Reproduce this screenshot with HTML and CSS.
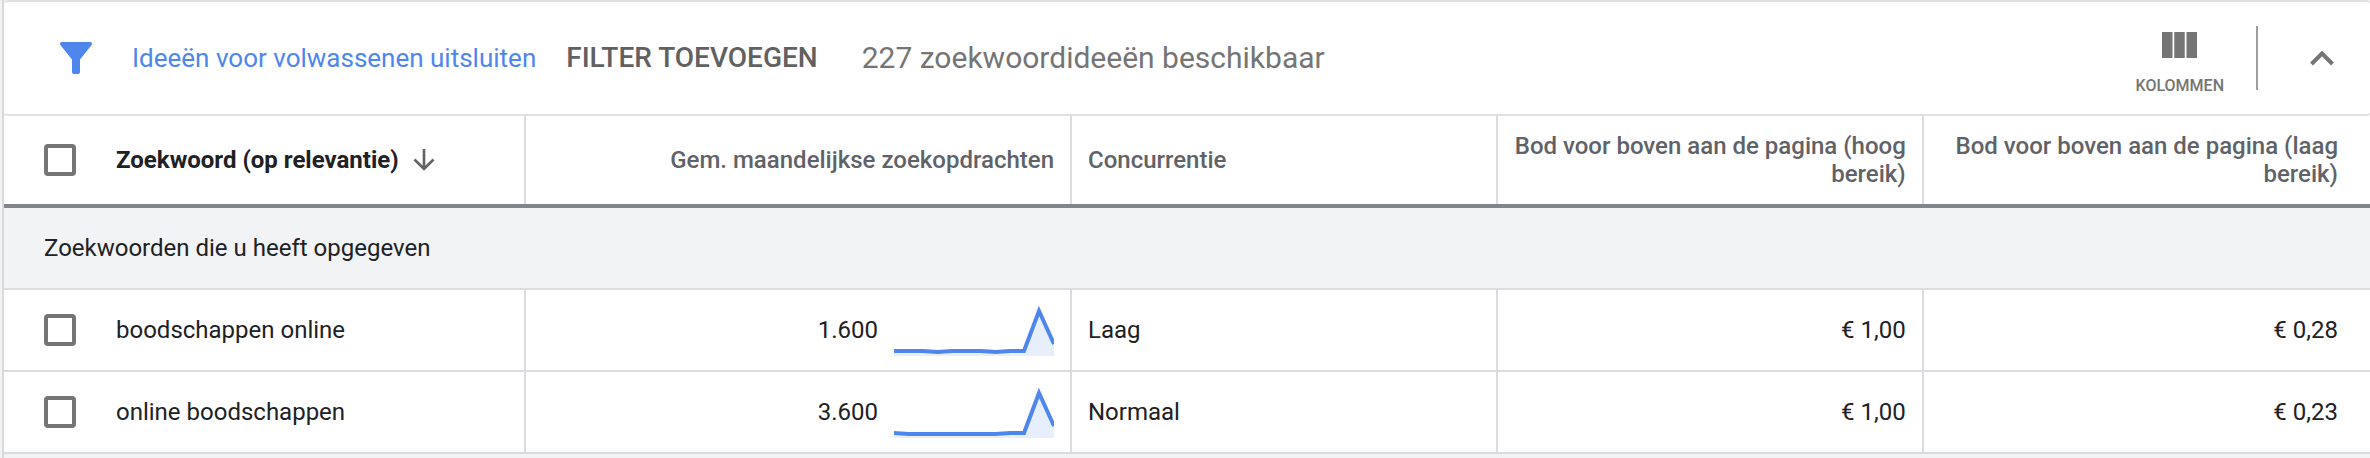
FILE: index.html
```html
<!DOCTYPE html>
<html lang="nl">
<head>
<meta charset="utf-8">
<title>Zoekwoordideeën</title>
<link rel="stylesheet" href="styles.css">
</head>
<body>
<main class="panel">
  <header class="toolbar">
    <svg class="filter-icon" viewBox="0 0 32 32" aria-hidden="true"><path d="M1.6 0H30.4Q32 0 32 1.6Q32 2.5 31.2 3.4L20 17.600V30.200Q20 32 18.200 32H13.800Q12 32 12 30.200V17.600L.8 3.400Q0 2.500 0 1.600Q0 0 1.600 0Z" fill="#4f86ec"/></svg>
    <a class="filter-link" href="#">Ideeën voor volwassenen uitsluiten</a>
    <button class="add-filter" type="button">FILTER TOEVOEGEN</button>
    <span class="count">227 zoekwoordideeën beschikbaar</span>
    <div class="actions">
      <button class="columns" type="button">
        <svg class="columns-icon" viewBox="0 0 35 26" aria-hidden="true"><path d="M0 0H10.500V26H0ZM12.250 0H22.750V26H12.250ZM24.500 0H35V26H24.500Z" fill="#757575"/></svg>
        <span>KOLOMMEN</span>
      </button>
      <button class="collapse" type="button" aria-label="Inklappen">
        <svg class="chevron-icon" viewBox="0 0 24 15" aria-hidden="true"><path d="M1.500 13L12 2.500L22.500 13" fill="none" stroke="#757575" stroke-width="4"/></svg>
      </button>
    </div>
  </header>
  <table class="grid">
    <colgroup><col class="col-keyword"><col class="col-volume"><col class="col-bid"><col class="col-bid"><col class="col-last"></colgroup>
    <thead>
      <tr>
        <th class="sorted" scope="col"><div class="keyword"><input class="check" type="checkbox" aria-label="Alles selecteren"><span>Zoekwoord (op relevantie)</span><svg class="sort-icon" viewBox="0 0 22 22" aria-hidden="true"><path d="M11 0V20M1.500 10.500L11 20L20.500 10.500" fill="none" stroke="#616161" stroke-width="2.600"/></svg></div></th>
        <th class="num" scope="col">Gem. maandelijkse zoekopdrachten</th>
        <th scope="col">Concurrentie</th>
        <th class="num" scope="col">Bod voor boven aan de pagina (hoog bereik)</th>
        <th class="num" scope="col">Bod voor boven aan de pagina (laag bereik)</th>
      </tr>
    </thead>
    <tbody>
      <tr><td class="group" colspan="5">Zoekwoorden die u heeft opgegeven</td></tr>
      <tr>
        <td><label class="keyword"><input class="check" type="checkbox"><span>boodschappen online</span></label></td>
        <td><div class="volume"><span>1.600</span><svg class="spark" viewBox="0 -2 160 52" aria-hidden="true"><path d="M0 45H29L43.600 46L58 45H87L101.500 46L116 45H130L145 5L160 38V50H0Z" fill="#e8effc"/><path d="M0 45H29L43.600 46L58 45H87L101.500 46L116 45H130L145 5L160 38" fill="none" stroke="#4f86ec" stroke-width="4"/></svg></div></td>
        <td>Laag</td>
        <td class="num">€ 1,00</td>
        <td class="num">€ 0,28</td>
      </tr>
      <tr>
        <td><label class="keyword"><input class="check" type="checkbox"><span>online boodschappen</span></label></td>
        <td><div class="volume"><span>3.600</span><svg class="spark" viewBox="0 -2 160 52" aria-hidden="true"><path d="M0 45L14.500 46H101.500L116 45H130L145 5L160 38V50H0Z" fill="#e8effc"/><path d="M0 45L14.500 46H101.500L116 45H130L145 5L160 38" fill="none" stroke="#4f86ec" stroke-width="4"/></svg></div></td>
        <td>Normaal</td>
        <td class="num">€ 1,00</td>
        <td class="num">€ 0,23</td>
      </tr>
    </tbody>
  </table>
</main>
</body>
</html>
```
FILE: styles.css
```css
* {
  box-sizing: border-box;
}

body {
  margin: 0;
  padding-left: 2px;
  background: #f1f3f4;
  color: #202124;
  font: 24px/28px Roboto, sans-serif;
}

.panel {
  min-height: 100vh;
  border-left: 2px solid #d9d9d9;
}

.toolbar {
  display: flex;
  align-items: center;
  height: 116px;
  padding: 0 32px 0 56px;
  border: solid #e0e0e0;
  border-width: 2px 0;
  border-radius: 4px;
  background: #fff;
  white-space: nowrap;
}

button {
  padding: 0;
  border: 0;
  background: none;
  font: inherit;
  cursor: pointer;
}

.filter-icon {
  width: 32px;
  height: 32px;
  margin-right: 40px;
}

.filter-link {
  color: #4f86ec;
  font-size: 26px;
  text-decoration: none;
}

.add-filter {
  margin: 0 44px 0 30px;
  color: #616161;
  font-size: 28px;
  font-weight: 500;
}

.count {
  color: #757575;
  font-size: 30px;
}

.actions {
  display: flex;
  align-items: center;
  margin-left: auto;
}

.columns {
  display: flex;
  flex-direction: column;
  align-items: center;
  gap: 14px;
  height: 64px;
  padding-right: 32px;
  border-right: 2px solid #9e9e9e;
  color: #757575;
  font-size: 16px;
  font-weight: 500;
}

.columns-icon {
  flex: none;
  width: 35px;
  height: 26px;
  margin-top: 6px;
}

.collapse {
  display: flex;
  padding: 4px;
  margin-left: 48px;
}

.chevron-icon {
  width: 24px;
  height: 15px;
}

.grid {
  width: 100%;
  border-spacing: 0;
  table-layout: fixed;
  background: #fff;
}

.col-keyword {
  width: 22.06%;
}

.col-volume {
  width: 23.08%;
}

.col-bid {
  width: 18%;
}

.col-last {
  width: 18.86%;
}

th,
td {
  height: 82px;
  padding: 0 16px;
  border: solid #dadce0;
  border-width: 0 2px 2px 0;
  text-align: left;
}

th {
  height: 88px;
  border-bottom: 0;
  color: #5f6368;
  font-weight: 500;
}

th:first-child,
td:first-child {
  padding-left: 40px;
}

th:last-child,
td:last-child {
  padding-right: 32px;
  border-right: 0;
}

.sorted {
  color: #202124;
  font-weight: 700;
}

.group {
  height: 86px;
  border-top: 4px solid #80868b;
  background: #f1f3f4;
}

.num {
  text-align: right;
}

.keyword {
  display: flex;
  align-items: center;
}

.check {
  width: 32px;
  height: 32px;
  margin: 0 40px 0 0;
  border: 4px solid #757575;
  border-radius: 4px;
  background: #fff;
  appearance: none;
}

.check:checked {
  background: #4f86ec;
}

.sort-icon {
  width: 22px;
  height: 22px;
  margin-left: 14px;
}

.volume {
  display: flex;
  align-items: center;
  justify-content: flex-end;
  gap: 16px;
}

.spark {
  width: 160px;
  height: 52px;
}
```
